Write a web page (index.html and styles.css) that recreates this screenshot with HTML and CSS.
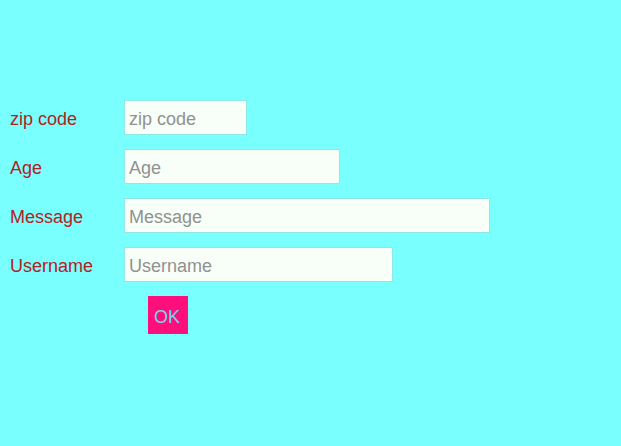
FILE: index.html
```html
<!DOCTYPE html>
<html lang="en">
<head>
<meta charset="utf-8">
<title>Form</title>
<link rel="stylesheet" href="styles.css">
</head>
<body>
<form class="form">
  <label class="label" for="zip">zip code</label>
  <input class="field" id="zip" type="text" placeholder="zip code">
  <label class="label" for="age">Age</label>
  <input class="field field-age" id="age" type="text" placeholder="Age">
  <label class="label" for="message">Message</label>
  <input class="field field-message" id="message" type="text" placeholder="Message">
  <label class="label" for="username">Username</label>
  <input class="field field-username" id="username" type="text" placeholder="Username">
  <button class="submit" type="button">OK</button>
</form>
</body>
</html>
```
FILE: styles.css
```css
body {
  margin: 0;
  background: #7affff;
  font-family: "Liberation Sans", Arial, sans-serif;
  font-size: 18px;
}

.form {
  display: grid;
  grid-template-columns: 114px 1fr;
  align-items: center;
  row-gap: 14px;
  padding: 100px 10px;
  color: #b22222;
}

.label {
  padding-top: 4px;
}

.field {
  box-sizing: border-box;
  width: 123px;
  max-width: 100%;
  height: 35px;
  padding: 4px 4px 0;
  border: 1px solid #8ee8e4;
  background: #f8fff8;
  color: #444;
  font: inherit;
}

.field::placeholder {
  color: #919191;
  opacity: 1;
}

.field-age {
  width: 216px;
  border-radius: 2px;
}

.field-message {
  width: 366px;
}

.field-username {
  width: 269px;
}

.submit {
  grid-column: 2;
  justify-self: start;
  margin-left: 24px;
  height: 38px;
  padding: 4px 8px 0 6px;
  border: 0;
  background: #ff0f7b;
  color: #7ad4f0;
  font: inherit;
}
```
